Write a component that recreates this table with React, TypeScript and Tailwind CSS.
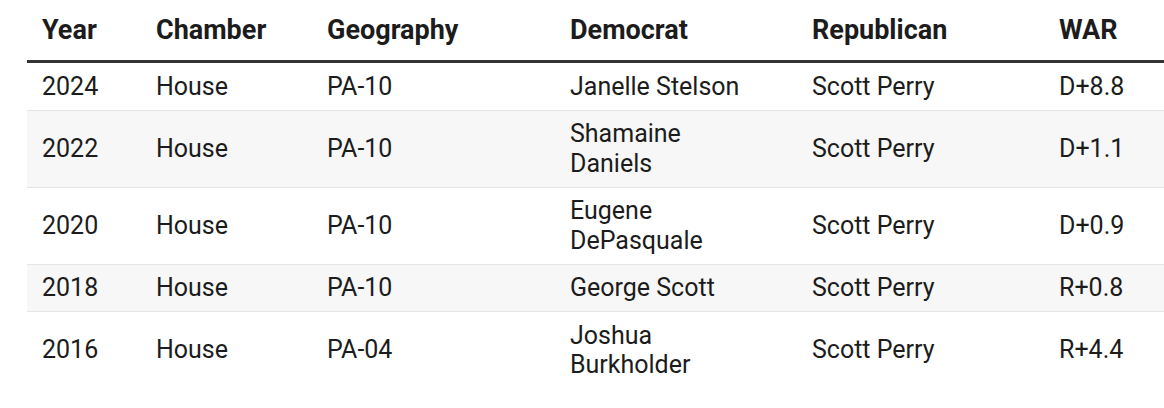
const rows = [
  { year: '2024', chamber: 'House', geo: 'PA-10', dem: 'Janelle Stelson', rep: 'Scott Perry', war: 'D+8.8' },
  { year: '2022', chamber: 'House', geo: 'PA-10', dem: 'Shamaine Daniels', rep: 'Scott Perry', war: 'D+1.1' },
  { year: '2020', chamber: 'House', geo: 'PA-10', dem: 'Eugene DePasquale', rep: 'Scott Perry', war: 'D+0.9' },
  { year: '2018', chamber: 'House', geo: 'PA-10', dem: 'George Scott', rep: 'Scott Perry', war: 'R+0.8' },
  { year: '2016', chamber: 'House', geo: 'PA-04', dem: 'Joshua Burkholder', rep: 'Scott Perry', war: 'R+4.4' },
];

export default function App() {
  return (
    <div className="min-h-[408px] bg-white pl-[27px] font-['Roboto',_sans-serif] text-[25px] leading-[29.5px] text-[#1c1c1c]">
      <table className="w-[1137px] table-fixed border-collapse text-left">
        <colgroup>
          <col className="w-[114px]" />
          <col className="w-[171px]" />
          <col className="w-[243px]" />
          <col className="w-[242px]" />
          <col className="w-[247px]" />
          <col className="w-[120px]" />
        </colgroup>
        <thead>
          <tr className="border-b-[3px] border-[#333333]">
            {['Year', 'Chamber', 'Geography', 'Democrat', 'Republican', 'WAR'].map((h) => (
              <th key={h} className="px-[15px] pt-[16px] pb-[14.5px] text-[27px] font-bold align-bottom">
                {h}
              </th>
            ))}
          </tr>
        </thead>
        <tbody>
          {rows.map((r, i) => (
            <tr
              key={r.year}
              className={`${i % 2 === 1 ? 'bg-[#f7f7f7]' : 'bg-white'} ${i < rows.length - 1 ? 'border-b border-[#e4e4e4]' : ''}`}
            >
              <td className="px-[15px] py-[8.5px] align-middle">{r.year}</td>
              <td className="px-[15px] py-[8.5px] align-middle">{r.chamber}</td>
              <td className="px-[15px] py-[8.5px] align-middle">{r.geo}</td>
              <td className="pl-[15px] pr-[45px] py-[8.5px] align-middle">{r.dem}</td>
              <td className="px-[15px] py-[8.5px] align-middle">{r.rep}</td>
              <td className="px-[15px] py-[8.5px] align-middle">{r.war}</td>
            </tr>
          ))}
        </tbody>
      </table>
    </div>
  );
}
